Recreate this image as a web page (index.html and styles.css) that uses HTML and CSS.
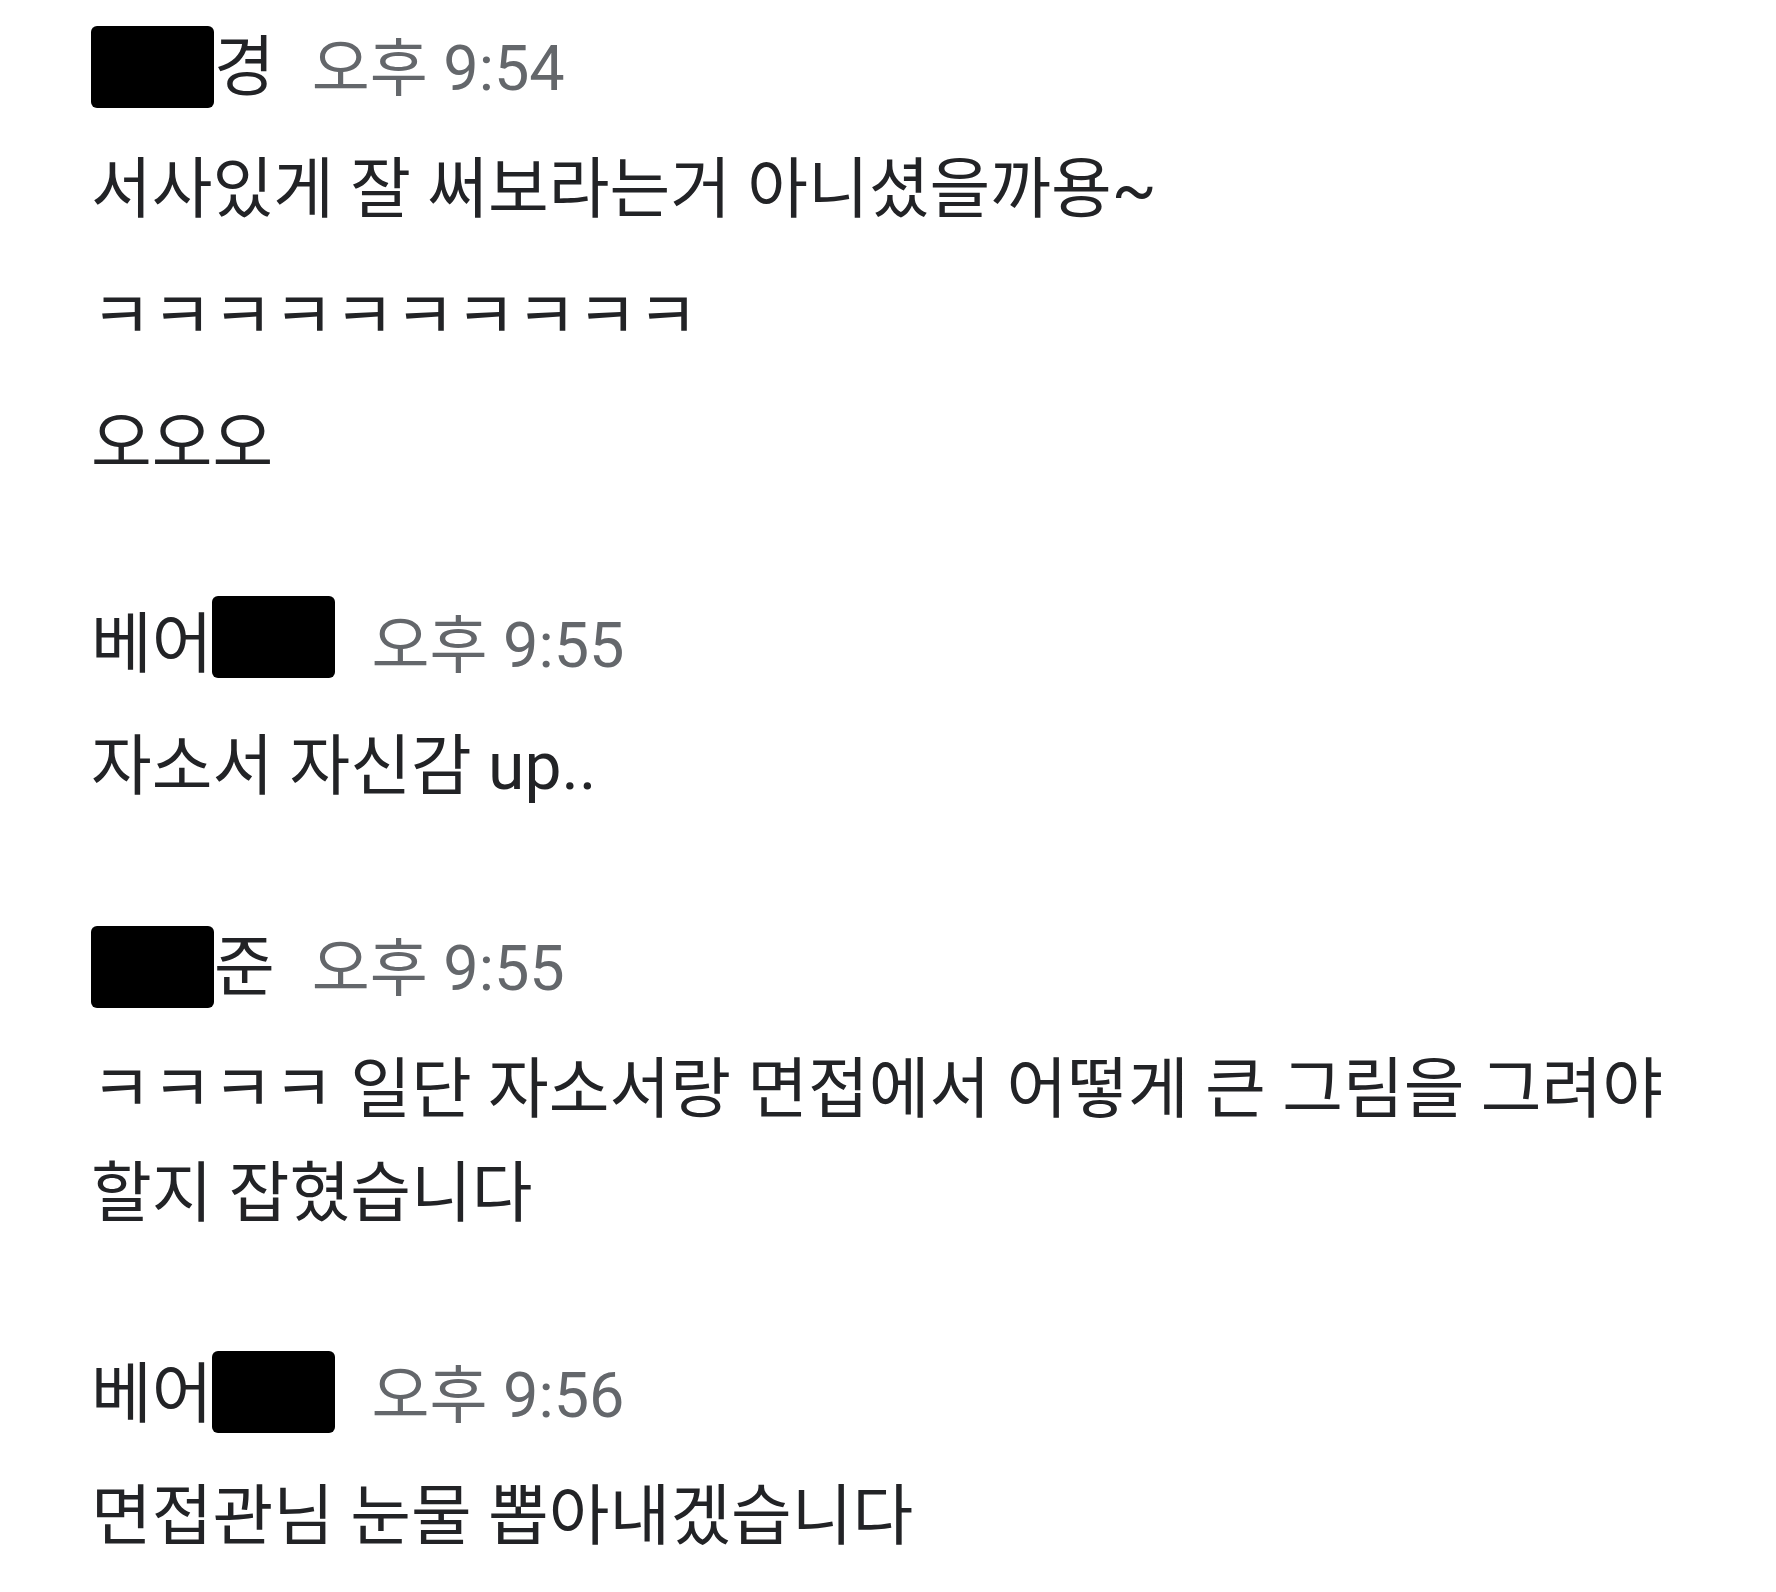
FILE: index.html
```html
<!DOCTYPE html>
<html lang="ko">
<head>
<meta charset="utf-8">
<title>채팅</title>
<link rel="stylesheet" href="styles.css">
</head>
<body>
<main class="chat">
  <section class="group">
    <div class="head"><span class="name"><span class="redact"></span>경</span><span class="time">오후 9:54</span></div>
    <p class="msg">서사있게 잘 써보라는거 아니셨을까용~</p>
    <p class="msg">ㅋㅋㅋㅋㅋㅋㅋㅋㅋㅋ</p>
    <p class="msg">오오오</p>
  </section>
  <section class="group">
    <div class="head trail"><span class="name">베어<span class="redact after high"></span></span><span class="time">오후 9:55</span></div>
    <p class="msg">자소서 자신감 up..</p>
  </section>
  <section class="group">
    <div class="head"><span class="name"><span class="redact"></span>준</span><span class="time">오후 9:55</span></div>
    <p class="msg">ㅋㅋㅋㅋ 일단 자소서랑 면접에서 어떻게 큰 그림을 그려야 할지 잡혔습니다</p>
  </section>
  <section class="group">
    <div class="head trail"><span class="name">베어<span class="redact after mid"></span></span><span class="time">오후 9:56</span></div>
    <p class="msg">면접관님 눈물 뽑아내겠습니다</p>
  </section>
</main>
</body>
</html>
```
FILE: styles.css
```css
html, body {
  margin: 0;
  padding: 0;
  background: #ffffff;
}

body {
  font-family: "Roboto", "Noto Sans CJK KR", sans-serif;
  font-size: 66px;
  color: #222326;
}

.chat {
  padding: 13px 0 40px 91px;
  width: 1600px;
}

.group + .group {
  margin-top: 94px;
}

.head {
  line-height: 110px;
  height: 110px;
  margin-bottom: 15px;
  white-space: nowrap;
}

.name {
  color: #222326;
}

.redact {
  display: inline-block;
  width: 123px;
  height: 82px;
  background: #000;
  border-radius: 6px;
  vertical-align: -18px;
}

.redact.after {
  margin-left: 0;
}

.redact.high {
  vertical-align: -11px;
}

.redact.mid {
  vertical-align: -16px;
}

.time {
  color: #64676b;
  font-size: 63px;
  margin-left: 37px;
}

.head.trail .time {
  margin-left: 36px;
}

.msg {
  margin: 0;
  line-height: 104px;
}

.msg + .msg {
  margin-top: 23px;
}
```
